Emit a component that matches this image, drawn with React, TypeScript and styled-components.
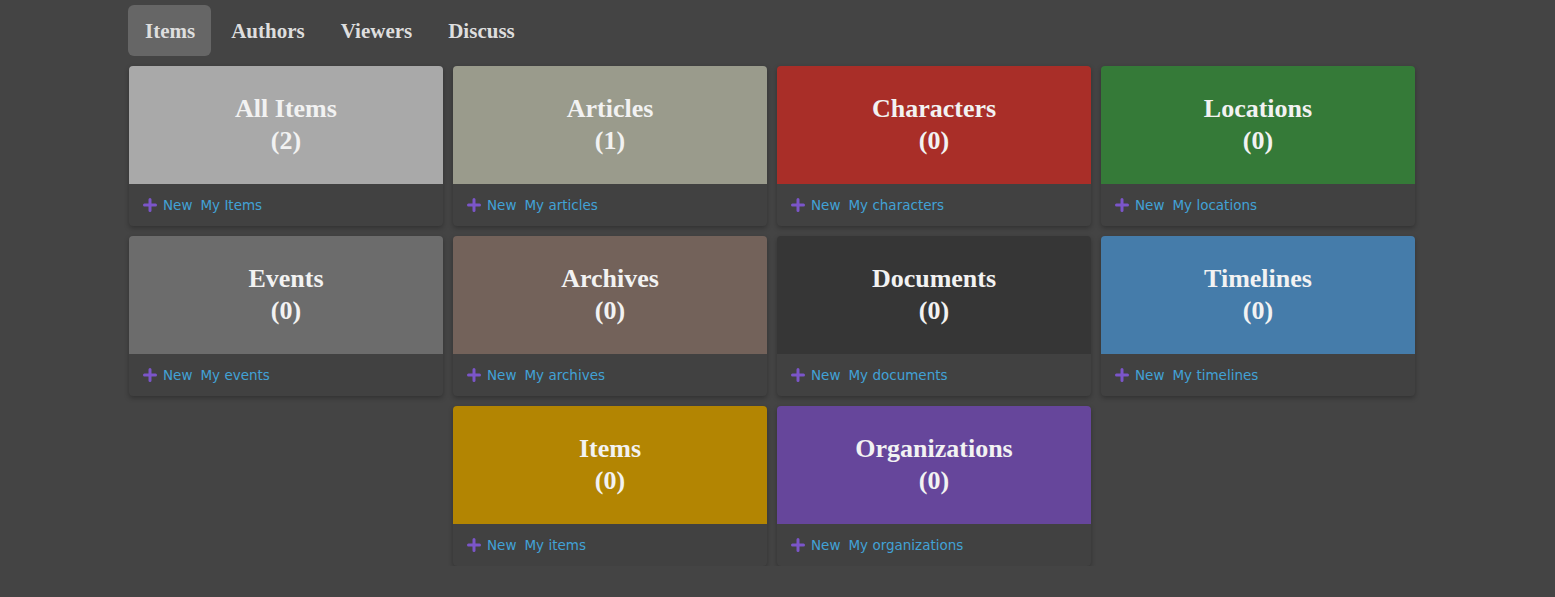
import React from "react";
import styled, { createGlobalStyle } from "styled-components";

const Global = createGlobalStyle`
  html, body { margin: 0; padding: 0; background: #444444; }
  body { font-family: "Liberation Serif", serif; }
`;

const Page = styled.div`
  padding: 5px 0 0 128px;
  width: 1290px;
`;

const Tabs = styled.nav`
  display: flex;
  gap: 3px;
  height: 51px;
`;

const Tab = styled.div<{ $active?: boolean }>`
  display: flex;
  align-items: center;
  padding: 2px 16px 0 17px;
  border-radius: 6px;
  background: ${(p) => (p.$active ? "#666666" : "transparent")};
  color: #dedede;
  font-family: "Liberation Serif", serif;
  font-weight: 700;
  font-size: 21px;
`;

const Grid = styled.div`
  display: flex;
  flex-wrap: wrap;
  justify-content: center;
  gap: 10px;
  width: 1286px;
  margin: 10px 0 0 1px;
`;

const Card = styled.div`
  width: 314px;
  height: 160px;
  border-radius: 4px;
  overflow: hidden;
  background: #414141;
  box-shadow: 0 2px 5px rgba(0, 0, 0, 0.28);
  display: flex;
  flex-direction: column;
`;

const Header = styled.div<{ $bg: string }>`
  height: 118px;
  flex: none;
  background: ${(p) => p.$bg};
  display: flex;
  flex-direction: column;
  align-items: center;
  justify-content: center;
  color: #f2f2f2;
  font-family: "Liberation Serif", serif;
  font-weight: 700;
  font-size: 26px;
  line-height: 32px;
  box-sizing: border-box;
`;

const Footer = styled.div`
  flex: 1;
  display: flex;
  align-items: center;
  padding: 0 0 0 14px;
  gap: 8px;
  font-family: "DejaVu Sans", sans-serif;
  font-size: 13.5px;
  color: #42a2d6;
`;

const NewLink = styled.span`
  display: flex;
  align-items: center;
  gap: 6px;
`;

const Plus = () => (
  <svg width="14" height="14" viewBox="0 0 14 14">
    <path d="M7 1.5v11M1.5 7h11" stroke="#7b55c9" strokeWidth="3" strokeLinecap="round" />
  </svg>
);

const cards = [
  { t: "All Items", n: 2, bg: "#a9a9a9", my: "My Items" },
  { t: "Articles", n: 1, bg: "#9a9b8c", my: "My articles" },
  { t: "Characters", n: 0, bg: "#a92e28", my: "My characters" },
  { t: "Locations", n: 0, bg: "#357a38", my: "My locations" },
  { t: "Events", n: 0, bg: "#6c6c6c", my: "My events" },
  { t: "Archives", n: 0, bg: "#73625a", my: "My archives" },
  { t: "Documents", n: 0, bg: "#363636", my: "My documents" },
  { t: "Timelines", n: 0, bg: "#457caa", my: "My timelines" },
  { t: "Items", n: 0, bg: "#b38502", my: "My items" },
  { t: "Organizations", n: 0, bg: "#66469b", my: "My organizations" },
];

export default function App() {
  return (
    <Page>
      <Global />
      <Tabs>
        <Tab $active>Items</Tab>
        <Tab>Authors</Tab>
        <Tab>Viewers</Tab>
        <Tab>Discuss</Tab>
      </Tabs>
      <Grid>
        {cards.map((c) => (
          <Card key={c.t}>
            <Header $bg={c.bg}>
              <div>{c.t}</div>
              <div>({c.n})</div>
            </Header>
            <Footer>
              <NewLink>
                <Plus />
                New
              </NewLink>
              <span>{c.my}</span>
            </Footer>
          </Card>
        ))}
      </Grid>
    </Page>
  );
}
